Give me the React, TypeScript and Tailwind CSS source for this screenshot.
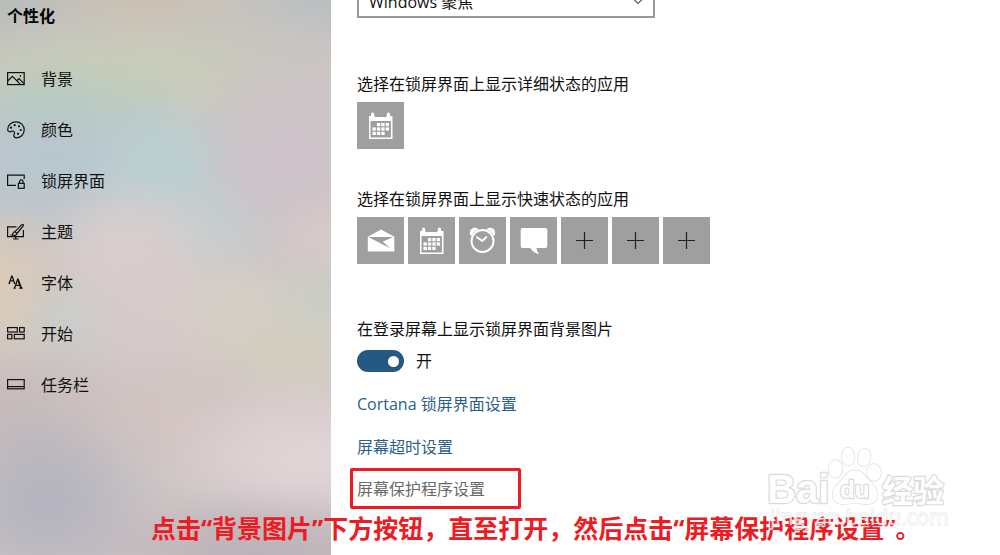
import React from "react";

const FONT = "font-['Open_Sans','Noto_Sans_CJK_SC',sans-serif]";

const line = {
  fill: "none",
  stroke: "currentColor",
  strokeWidth: 1.2,
} as const;

function NavSvg({ children }: { children: React.ReactNode }) {
  return (
    <svg viewBox="0 0 18 18" className="size-[18px] shrink-0" aria-hidden="true" {...line}>
      {children}
    </svg>
  );
}

const navItems: { label: string; icon: React.ReactNode }[] = [
  {
    label: "背景",
    icon: (
      <NavSvg>
        <rect x="0.6" y="2.6" width="16.6" height="12" />
        <path d="M.6 11 5.4 6.3l8.3 8.3M9.8 10.700l2.200-2 5.200 5.200" />
        <circle cx="13.4" cy="5.9" r=".8" fill="currentColor" stroke="none" />
      </NavSvg>
    ),
  },
  {
    label: "颜色",
    icon: (
      <NavSvg>
        <path d="M9 .8C13.600.8 17.200 4.300 17.200 8.800c0 4.600-3.400 8-7.600 8-1.700 0-2.800-.8-2.800-2.200 0-1 .7-1.700.7-2.700 0-1.200-.8-1.900-1.900-1.900-1 0-1.500.8-2.700.8C1.500 10.800.7 9.900.7 8.500.7 4.200 4.400.8 9 .8Z" />
        <g fill="currentColor" stroke="none">
          <circle cx="4" cy="6.700" r="1.100" />
          <circle cx="7.700" cy="4.200" r="1.100" />
          <circle cx="12" cy="5.300" r="1.100" />
          <circle cx="13.700" cy="9" r="1.100" />
          <circle cx="11" cy="12.800" r="1.100" />
        </g>
      </NavSvg>
    ),
  },
  {
    label: "锁屏界面",
    icon: (
      <NavSvg>
        <path d="M9 13.400H.6V3.100h16.600v4" />
        <rect x="11.400" y="11.300" width="5.800" height="5" />
        <path d="M12.600 11.300V9.600a1.700 1.700 0 0 1 3.400 0v1.700" />
      </NavSvg>
    ),
  },
  {
    label: "主题",
    icon: (
      <NavSvg>
        <path d="M9.500 3.800H.6v9.800h15.800V7M6 16h5.500M8.700 13.600v2.400" />
        <path d="M8 8.700 14.800 1.600c1-.8 2.200.3 1.400 1.400L10 10.500M8 8.700c-1.700.1-2 1.300-2.500 2.700-.1.300-.5.500-.9.600 2.300.8 5.200.6 5.400-1.500Z" />
      </NavSvg>
    ),
  },
  {
    label: "字体",
    icon: (
      <NavSvg>
        <path d="M2.200 9.300 4.700 2.200h.4l2.500 7.100M3 6.800h3.700M1.500 9.300h1.600M6.800 9.300h1.600" />
        <path d="M7.500 14.200 10.700 5.200l3.500 9M8.700 11.300h4M6.500 14.200h2.200M12.200 14.200h3.500" />
        <path d="m10.900 5.400 3.300 8.800" strokeWidth="1.800" />
      </NavSvg>
    ),
  },
  {
    label: "开始",
    icon: (
      <NavSvg>
        <rect x=".6" y="2.600" width="9.700" height="4.400" />
        <rect x="12.600" y="2.600" width="4.600" height="4.400" />
        <rect x=".6" y="9.400" width="4.200" height="4.400" />
        <rect x="7.300" y="9.400" width="9.900" height="4.400" />
      </NavSvg>
    ),
  },
  {
    label: "任务栏",
    icon: (
      <NavSvg>
        <rect x=".6" y="3.600" width="16.600" height="9.200" />
        <path d="M.6 10.600h16.600" />
      </NavSvg>
    ),
  },
];

function CalendarIcon() {
  return (
    <svg viewBox="0 0 28 28" className="size-7" fill="#fff" aria-hidden="true">
      <path
        fillRule="evenodd"
        d="M2 4h2V2a1.600 1.600 0 0 1 3.200 0V4q1 1.700 2.700 1h7.200q1.700.7 2.700-1V2a1.600 1.600 0 0 1 3.200 0V4H25.500v23H2ZM3.500 9v16.500h20.400V9Z"
      />
      {[0, 1, 2].map((r) =>
        [0, 1, 2, 3].map((c) =>
          (r === 0 && c === 0) || (r === 2 && c === 3) ? null : (
            <rect key={`${r}${c}`} x={5.500 + c * 4.400} y={11 + r * 4.400} width="3.300" height="3.200" />
          ),
        ),
      )}
    </svg>
  );
}

function MailIcon() {
  return (
    <svg viewBox="0 0 28 28" className="size-7" fill="#fff" aria-hidden="true">
      <path d="M.8 9.700 14 2.500l13.300 7.200V24.500H.8Z" />
      <path d="M1.300 9.900h25.200L16 14.800l7 6.500Z" fill="#9f9f9f" />
      <path d="m16 14.700 10.800-4.800L19.500 17.500Z" />
    </svg>
  );
}

function ClockIcon() {
  return (
    <svg viewBox="0 0 28 28" className="size-7" aria-hidden="true">
      <circle cx="5.800" cy="5.800" r="5" fill="#fff" />
      <circle cx="21.200" cy="5.800" r="5" fill="#fff" />
      <circle cx="13.500" cy="14" r="12.200" fill="#9f9f9f" />
      <circle cx="13.500" cy="14" r="11" fill="none" stroke="#fff" strokeWidth="2" />
      <path d="m7.300 9.700 6 4.300 4.600-4.500" fill="none" stroke="#fff" strokeWidth="1.800" />
    </svg>
  );
}

function ChatIcon() {
  return (
    <svg viewBox="0 0 28 28" className="size-7" fill="#fff" aria-hidden="true">
      <path d="M2.500.9h23Q27.300.9 27.300 2.700v16.500q0 1.800-1.800 1.800H16.500q0 3.500 2.700 6.300Q13 25.800 10.300 21H2.500Q.7 21 .7 19.200V2.700Q.7.9 2.500.9Z" />
    </svg>
  );
}

function PlusIcon() {
  return (
    <svg viewBox="0 0 28 28" className="size-7" aria-hidden="true">
      <path d="M5 13.500h17M13.500 5v17" stroke="#222" strokeWidth="1.200" />
    </svg>
  );
}

function Tile({ label, children }: { label: string; children: React.ReactNode }) {
  return (
    <button
      type="button"
      aria-label={label}
      className="flex size-[47px] items-center justify-center bg-[#9f9f9f]"
    >
      {children}
    </button>
  );
}

const quickApps: { label: string; icon: React.ReactNode }[] = [
  { label: "邮件", icon: <MailIcon /> },
  { label: "日历", icon: <CalendarIcon /> },
  { label: "闹钟", icon: <ClockIcon /> },
  { label: "消息", icon: <ChatIcon /> },
  { label: "添加应用 1", icon: <PlusIcon /> },
  { label: "添加应用 2", icon: <PlusIcon /> },
  { label: "添加应用 3", icon: <PlusIcon /> },
];

function Backdrop() {
  const spots: [number, number, number, number, string][] = [
    [0, 0, 130, 60, "#b7bdba"],
    [160, 0, 100, 40, "#cbbfb0"],
    [325, 0, 90, 40, "#b5bdc0"],
    [240, 45, 120, 40, "#c6c4bf"],
    [110, 75, 190, 50, "#c9ceb8"],
    [50, 105, 110, 40, "#b8ccbc"],
    [50, 165, 140, 70, "#b5c6d0"],
    [165, 165, 70, 60, "#b9d1d3"],
    [290, 160, 80, 110, "#cdc3ca"],
    [200, 235, 60, 50, "#c2cfd1"],
    [125, 250, 70, 60, "#dbd0d0"],
    [0, 290, 60, 70, "#dccbb8"],
    [75, 320, 50, 40, "#c9cecb"],
    [160, 310, 80, 90, "#d8caca"],
    [325, 240, 50, 40, "#d8cac8"],
    [325, 310, 60, 50, "#c9cec6"],
    [240, 310, 60, 50, "#d5d0c5"],
    [290, 355, 90, 40, "#d4cebf"],
    [0, 410, 120, 50, "#c6bab8"],
    [180, 420, 120, 50, "#d2c4c2"],
    [310, 460, 120, 70, "#e3d6d9"],
    [45, 500, 90, 80, "#b3b2be"],
    [260, 550, 150, 50, "#bbb1b8"],
  ];
  return (
    <svg
      viewBox="0 0 331 555"
      preserveAspectRatio="none"
      className="absolute inset-0 size-full"
      aria-hidden="true"
    >
      <defs>
        <filter id="soften" x="-20%" y="-20%" width="140%" height="140%" colorInterpolationFilters="sRGB">
          <feGaussianBlur stdDeviation="12" />
        </filter>
        {spots.map(([, , , , color], i) => (
          <radialGradient key={i} id={`spot${i}`}>
            <stop offset="0" stopColor={color} />
            <stop offset=".4" stopColor={color} stopOpacity=".7" />
            <stop offset="1" stopColor={color} stopOpacity="0" />
          </radialGradient>
        ))}
      </defs>
      <g filter="url(#soften)">
        <rect x="-80" y="-80" width="491" height="715" fill="#cdc5c4" />
        {spots.map(([cx, cy, rx, ry], i) => (
          <ellipse key={i} cx={cx} cy={cy} rx={rx * 1.300} ry={ry * 1.300} fill={`url(#spot${i})`} />
        ))}
      </g>
    </svg>
  );
}

function Watermark() {
  return (
    <svg
      viewBox="0 0 184 88"
      className="pointer-events-none absolute right-[50px] bottom-[22px] h-[88px] w-[184px]"
      fill="#fff"
      stroke="#dadada"
      strokeWidth="1.300"
      strokeLinejoin="round"
    >
      <g paintOrder="stroke" fontFamily="Liberation Sans, sans-serif" fontWeight="700">
        <text x="1" y="58" fontSize="40" strokeWidth="2.400">
          Bai
        </text>
        <text
          x="116"
          y="57"
          fontSize="31"
          strokeWidth="2.400"
          fontFamily="Noto Sans CJK SC, sans-serif"
        >
          经验
        </text>
        <ellipse cx="69.500" cy="24" rx="7" ry="9" />
        <ellipse cx="82" cy="11.500" rx="6.500" ry="9" />
        <ellipse cx="98" cy="12.500" rx="6.500" ry="9" transform="rotate(10 98 12.500)" />
        <ellipse cx="108" cy="27.500" rx="7" ry="8.500" />
        <path d="M89 25.500c-7 0-9.500 5-13 9-4 4.500-9.500 8-9.500 15.500 0 5.500 4 9 9.500 9 5 0 8-.8 13-.8s8.500 1.300 13.500.8c6-.6 9-4 9-9 0-7-5-11-9-15.500-3.500-4-6-9-13.500-9Z" />
        <text x="74" y="53" fontSize="24" strokeWidth="2.400">
          du
        </text>
      </g>
      <text
        x="4"
        y="80"
        fontSize="21"
        fontFamily="Open Sans, sans-serif"
        paintOrder="stroke"
        stroke="#bbbbbb"
        strokeOpacity=".35"
        fillOpacity=".75"
      >
        jingyan.baidu.com
      </text>
    </svg>
  );
}

export default function App() {
  return (
    <div
      className={`relative flex min-h-screen items-stretch overflow-hidden bg-white text-base leading-6 text-[#111] ${FONT}`}
    >
      <aside className="relative w-[331px] shrink-0">
        <Backdrop />
        <div className="relative pt-1">
          <h1 className="px-[7px] font-bold text-black">个性化</h1>
          <nav className="mt-[25px]">
            <ul>
              {navItems.map((item) => (
                <li key={item.label}>
                  <a href="#" className="flex h-[51px] items-center gap-4 px-[7px]">
                    {item.icon}
                    <span>{item.label}</span>
                  </a>
                </li>
              ))}
            </ul>
          </nav>
        </div>
      </aside>

      <main className="flex grow flex-col items-start pl-[26px]">
        <div className="relative -mt-[14px] w-[298px]">
          <select
            aria-label="背景"
            className="block h-8 w-full appearance-none border-2 border-[#999] bg-white pl-[10px] leading-6"
          >
            <option>Windows 聚焦</option>
          </select>
          <svg
            viewBox="0 0 12 8"
            className="pointer-events-none absolute top-[11px] right-[11px] h-2 w-3"
            fill="none"
            stroke="#555"
            strokeWidth="1.200"
            aria-hidden="true"
          >
            <path d="m1 1.500 5 5 5-5" />
          </svg>
        </div>

        <section className="mt-[54px]">
          <h2>选择在锁屏界面上显示详细状态的应用</h2>
          <div className="mt-[6px] flex gap-1">
            <Tile label="日历详细状态">
              <CalendarIcon />
            </Tile>
          </div>
        </section>

        <section className="mt-[38px]">
          <h2>选择在锁屏界面上显示快速状态的应用</h2>
          <div className="mt-[6px] flex gap-1">
            {quickApps.map((app) => (
              <Tile key={app.label} label={app.label}>
                {app.icon}
              </Tile>
            ))}
          </div>
        </section>

        <section className="mt-[53px]">
          <h2>在登录屏幕上显示锁屏界面背景图片</h2>
          <label className="mt-2 flex items-center gap-3">
            <input type="checkbox" role="switch" defaultChecked className="peer sr-only" />
            <span className="flex h-[22px] w-[47px] items-center justify-end rounded-full bg-[#245a82] pr-[5px]">
              <span className="size-[11px] rounded-full bg-white" />
            </span>
            <span>开</span>
          </label>
        </section>

        <div className="mt-[19px] flex flex-col items-start gap-[19px] text-[#2b5f88]">
          <a href="#">Cortana 锁屏界面设置</a>
          <a href="#">屏幕超时设置</a>
        </div>
        <a
          href="#"
          className="-ml-[7px] mt-[9px] flex h-[41px] w-[171px] items-center rounded-xs border-[3px] border-[#ed1c24] pl-1 text-[#6a6a6a]"
        >
          屏幕保护程序设置
        </a>
      </main>

      <p className="absolute bottom-[9px] left-[151px] text-[25px] leading-9 font-bold whitespace-nowrap text-[#ed1c24]">
        点击“背景图片”下方按钮，直至打开，然后点击“屏幕保护程序设置”。
      </p>
      <Watermark />
    </div>
  );
}
